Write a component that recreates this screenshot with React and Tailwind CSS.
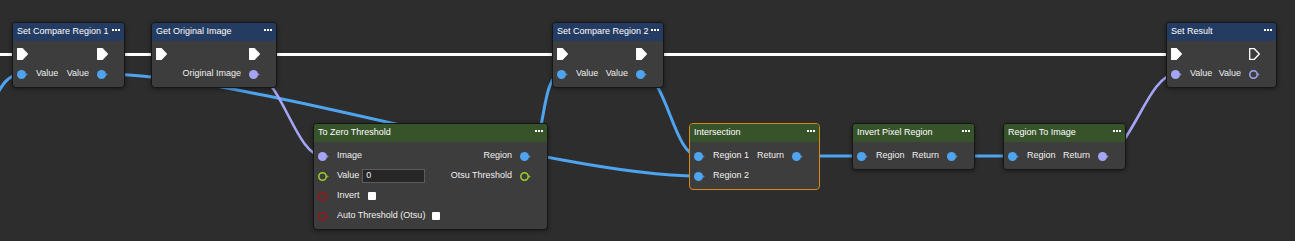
import React from 'react';
import clsx from 'clsx';

const BLUE = '#4ea4ef';
const LAV = '#a5a5f5';
const GREEN = '#9fd02c';
const RED = '#9a1717';

// bezier like the graph editor: control points pushed out by a quarter of the distance
const wire = (x1, y1, x2, y2) => {
  const d = Math.hypot(x2 - x1, y2 - y1) * 0.25;
  return `M${x1} ${y1} C${x1 + d} ${y1} ${x2 - d} ${y2} ${x2} ${y2}`;
};

const Pin = ({ color, hollow }) => (
  <svg width="11" height="9" viewBox="0 0 11 9" className="shrink-0">
    {hollow ? (
      <circle cx="4.5" cy="4.5" r="3.7" fill="none" stroke={color} strokeWidth="1.5" />
    ) : (
      <circle cx="4.5" cy="4.5" r="4.5" fill={color} />
    )}
    <path d="M8.7 3 L10.8 4.5 L8.7 6 Z" fill={color} opacity="0.75" />
  </svg>
);

const Exec = ({ hollow }) => (
  <svg width="11" height="12" viewBox="0 0 11 12" className="shrink-0">
    <path
      d="M0.7 0.7 H5.3 L10.3 6 L5.3 11.3 H0.7 Z"
      fill={hollow ? 'none' : '#ffffff'}
      stroke="#ffffff"
      strokeWidth="1.3"
    />
  </svg>
);

const Dots = () => (
  <div className="mt-[-4px] flex gap-[1px] self-center">
    <span className="h-[2px] w-[2px] bg-white" />
    <span className="h-[2px] w-[2px] bg-white" />
    <span className="h-[2px] w-[2px] bg-white" />
  </div>
);

const Node = ({ pos, title, green, selected, exec, children }) => (
  <div
    className={clsx(
      'absolute rounded-[4px] border bg-[#3d3d3d]',
      selected ? 'border-[#d88a12]' : 'border-[#161616] shadow-[0_1px_4px_rgba(0,0,0,0.45)]',
      pos
    )}
  >
    <div
      className={clsx(
        'flex h-[18px] items-center justify-between rounded-t-[3px] pl-[4px] pr-[4px] text-white',
        green ? 'bg-[#37532a]' : 'bg-[#243c62]'
      )}
    >
      <span className="whitespace-nowrap">{title}</span>
      <Dots />
    </div>
    <div className={clsx('flex flex-col pb-[3px]', exec ? 'pt-[3px]' : 'pt-[4px]')}>{children}</div>
  </div>
);

const Row = ({ left, right }) => (
  <div className="flex h-[20px] items-center justify-between pl-[4px] pr-[16px]">
    <div className="flex items-center gap-[8px]">{left}</div>
    <div className="flex items-center gap-[8px]">{right}</div>
  </div>
);

const ExecRow = ({ outHollow }) => (
  <Row left={<Exec />} right={<Exec hollow={outHollow} />} />
);

export default function App() {
  return (
    <div className="relative h-[241px] w-[1295px] overflow-hidden bg-[#2d2d2d] font-['Liberation_Sans',Arial,sans-serif] text-[9px] text-[#f0f0f0]">
      {/* wires */}
      <svg className="absolute left-0 top-0" width="1295" height="241" fill="none">
        <path d="M0 54.5 H1172" stroke="#ffffff" strokeWidth="3" />
        <path d="M-6 100 C2 84 8 75 21.5 74" stroke={BLUE} strokeWidth="3" />
        <path d={wire(101.5, 74, 698.5, 176)} stroke={BLUE} strokeWidth="3" />
        <path d={wire(253.5, 74, 322.5, 156)} stroke={LAV} strokeWidth="2.6" />
        <path d={wire(524.5, 156, 561.5, 74)} stroke={BLUE} strokeWidth="3" />
        <path d={wire(641.5, 74, 698.5, 156)} stroke={BLUE} strokeWidth="3" />
        <path d={wire(796.5, 156, 861.5, 156)} stroke={BLUE} strokeWidth="3" />
        <path d={wire(951.5, 156, 1012.5, 156)} stroke={BLUE} strokeWidth="3" />
        <path d={wire(1102.5, 156, 1175.5, 74)} stroke={LAV} strokeWidth="2.6" />
      </svg>

      <Node pos="left-[12px] top-[22px] w-[113px]" title="Set Compare Region 1" exec>
        <ExecRow />
        <Row
          left={<><Pin color={BLUE} /><span>Value</span></>}
          right={<><span>Value</span><Pin color={BLUE} /></>}
        />
      </Node>

      <Node pos="left-[151px] top-[22px] w-[126px]" title="Get Original Image" exec>
        <ExecRow />
        <Row left={null} right={<><span>Original Image</span><Pin color={LAV} /></>} />
      </Node>

      <Node pos="left-[552px] top-[22px] w-[112px]" title="Set Compare Region 2" exec>
        <ExecRow />
        <Row
          left={<><Pin color={BLUE} /><span>Value</span></>}
          right={<><span>Value</span><Pin color={BLUE} /></>}
        />
      </Node>

      <Node pos="left-[1166px] top-[22px] w-[111px]" title="Set Result" exec>
        <ExecRow outHollow />
        <Row
          left={<><Pin color={LAV} /><span>Value</span></>}
          right={<><span>Value</span><Pin color={LAV} hollow /></>}
        />
      </Node>

      <Node pos="left-[313px] top-[123px] w-[235px]" title="To Zero Threshold" green>
        <Row
          left={<><Pin color={LAV} /><span>Image</span></>}
          right={<><span>Region</span><Pin color={BLUE} /></>}
        />
        <Row
          left={
            <>
              <Pin color={GREEN} hollow />
              <span className="flex items-center">
                Value
                <span className="ml-[3px] flex h-[14px] w-[63px] items-center border border-[#5c5c5c] bg-[#262626] pl-[3px] text-[#f0f0f0]">
                  0
                </span>
              </span>
            </>
          }
          right={<><span>Otsu Threshold</span><Pin color={GREEN} hollow /></>}
        />
        <Row
          left={
            <>
              <Pin color={RED} hollow />
              <span className="flex items-center">
                Invert
                <span className="ml-[8px] h-[8px] w-[8px] rounded-[1px] bg-white" />
              </span>
            </>
          }
          right={null}
        />
        <Row
          left={
            <>
              <Pin color={RED} hollow />
              <span className="flex items-center">
                Auto Threshold (Otsu)
                <span className="ml-[7px] h-[8px] w-[8px] rounded-[1px] bg-white" />
              </span>
            </>
          }
          right={null}
        />
      </Node>

      <Node pos="left-[689px] top-[123px] w-[131px]" title="Intersection" green selected>
        <Row
          left={<><Pin color={BLUE} /><span>Region 1</span></>}
          right={<><span>Return</span><Pin color={BLUE} /></>}
        />
        <Row left={<><Pin color={BLUE} /><span>Region 2</span></>} right={null} />
      </Node>

      <Node pos="left-[852px] top-[123px] w-[123px]" title="Invert Pixel Region" green>
        <Row
          left={<><Pin color={BLUE} /><span>Region</span></>}
          right={<><span>Return</span><Pin color={BLUE} /></>}
        />
      </Node>

      <Node pos="left-[1003px] top-[123px] w-[123px]" title="Region To Image" green>
        <Row
          left={<><Pin color={BLUE} /><span>Region</span></>}
          right={<><span>Return</span><Pin color={LAV} /></>}
        />
      </Node>
    </div>
  );
}
